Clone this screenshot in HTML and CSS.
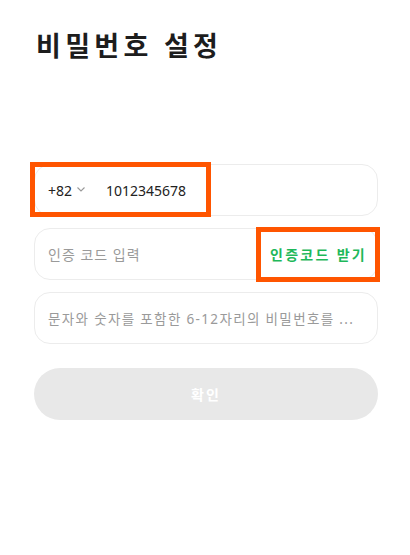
FILE: index.html
```html
<!DOCTYPE html>
<html lang="ko">
<head>
    <meta charset="UTF-8">
    <meta name="viewport" content="width=device-width, initial-scale=1.0">
    <title>비밀번호 설정</title>
    <link rel="stylesheet" href="styles.css">
</head>
<body>
    <div class="page">
        <h1 class="title">비밀번호 설정</h1>

        <form class="form">
            <div class="field phone-field">
                <span class="country">+82
                    <svg class="chevron" width="10" height="10" viewBox="0 0 10 10"><path d="M1.5 3.5 L5 7 L8.5 3.5" fill="none" stroke="#999" stroke-width="1.1"/></svg>
                </span>
                <span class="phone">1012345678</span>
                <div class="mark mark-phone"></div>
            </div>

            <div class="field code-field">
                <span class="placeholder">인증 코드 입력</span>
                <span class="get-code">인증코드 받기</span>
                <div class="mark mark-code"></div>
            </div>

            <div class="field">
                <span class="placeholder long">문자와 숫자를 포함한 6-12자리의 비밀번호를 ...</span>
            </div>

            <button type="button" class="submit">확인</button>
        </form>
    </div>
</body>
</html>
```

FILE: styles.css
```css
* {
    margin: 0;
    padding: 0;
    box-sizing: border-box;
    font-family: 'Noto Sans', 'Noto Sans CJK KR', sans-serif;
}

body {
    background: #fff;
    color: #222;
}

.page {
    padding: 26px 32px 0 34px;
}

.title {
    font-size: 27px;
    font-weight: 700;
    color: #1d1d1d;
    padding-left: 2px;
    letter-spacing: 4.3px;
    line-height: 40px;
}

.form {
    margin-top: 98px;
    display: flex;
    flex-direction: column;
    gap: 12px;
}

.field {
    position: relative;
    height: 52px;
    border: 1px solid #ececec;
    border-radius: 16px;
    display: flex;
    align-items: center;
    padding: 0 13px;
    font-size: 14px;
}

.country {
    display: flex;
    align-items: center;
    gap: 4px;
    color: #222;
}

.chevron {
    margin-top: -2px;
}

.phone {
    margin-left: 20px;
    color: #222;
}

.placeholder {
    color: #9a9a9a;
    letter-spacing: 1px;
}

.long {
    white-space: nowrap;
    font-size: 13.5px;
    letter-spacing: 1.35px;
}

.code-field {
    justify-content: space-between;
}

.get-code {
    color: #1eb85a;
    font-weight: 700;
    letter-spacing: 2.3px;
    margin-right: -3px;
}

.submit {
    margin-top: 12px;
    height: 52px;
    border: none;
    border-radius: 26px;
    background: #e8e8e8;
    color: #fff;
    font-size: 14px;
    font-weight: 700;
    letter-spacing: 2px;
}

/* annotation boxes */
.mark {
    position: absolute;
    border: 5px solid #ff5500;
    pointer-events: none;
}

.mark-phone {
    left: -5px;
    top: -3px;
    width: 181px;
    height: 55px;
}

.mark-code {
    right: -3px;
    top: -2px;
    width: 124px;
    height: 55px;
}
```
